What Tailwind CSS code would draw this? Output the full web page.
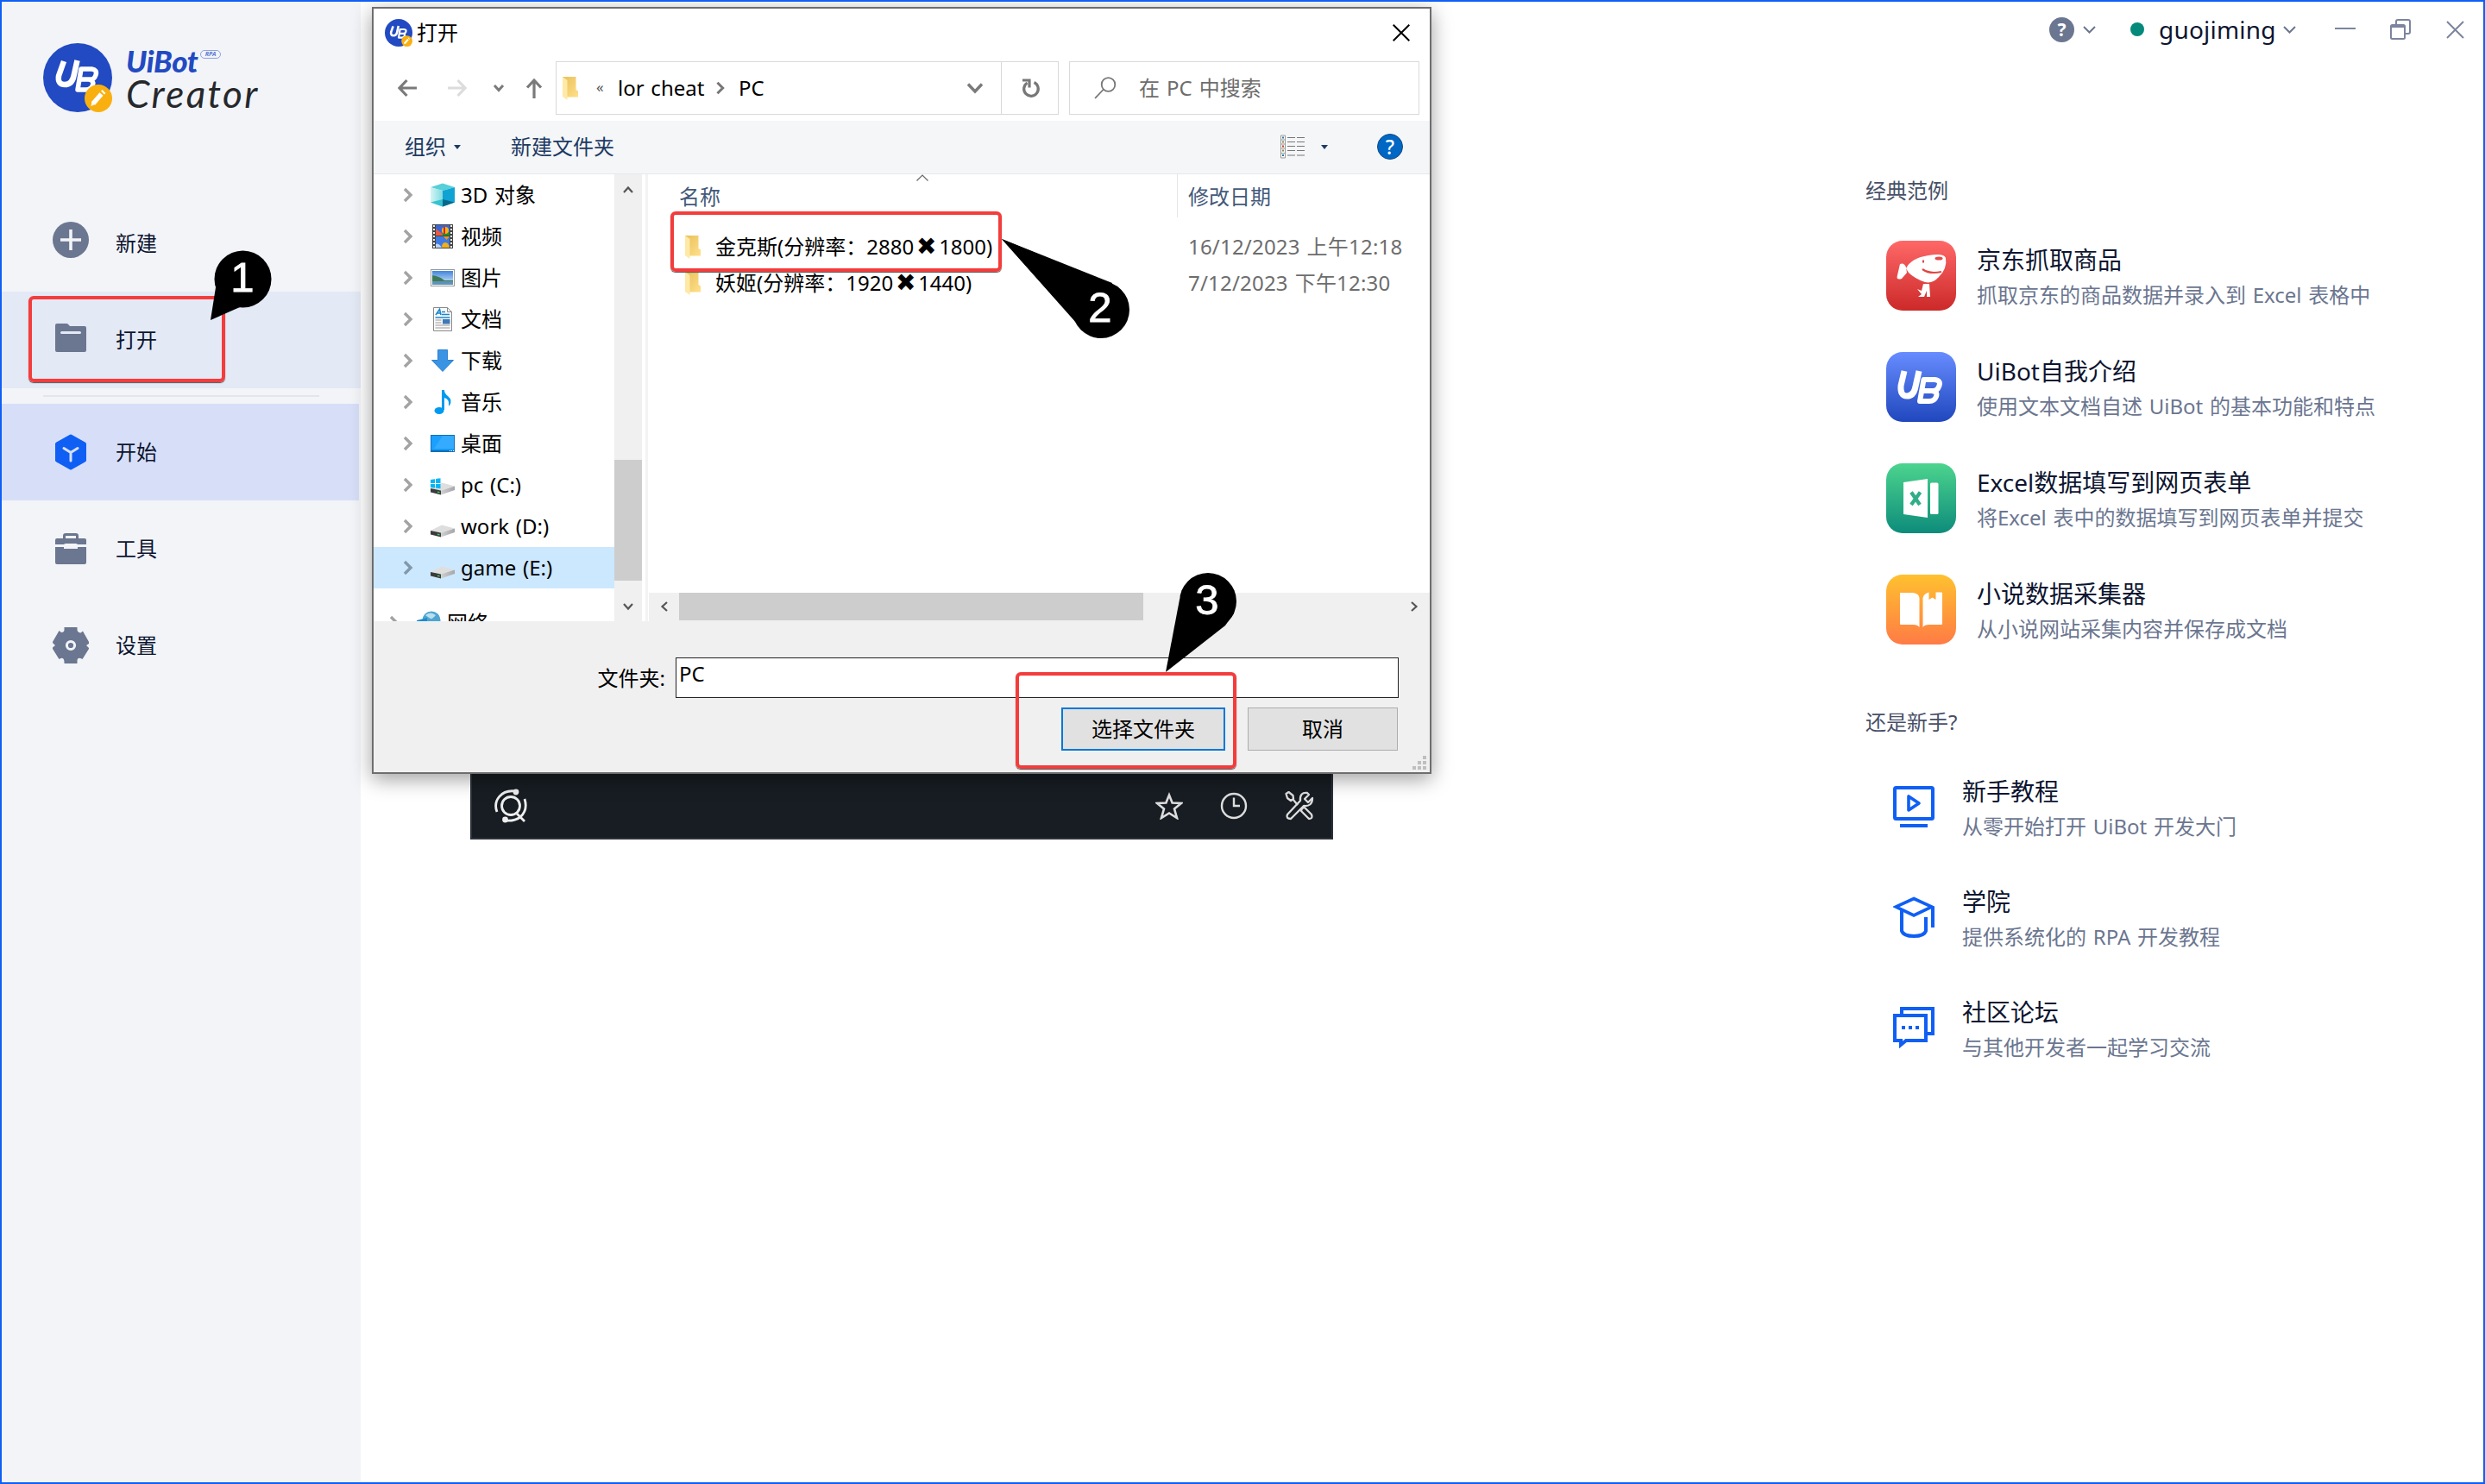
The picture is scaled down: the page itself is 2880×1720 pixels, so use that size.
<!DOCTYPE html>
<html lang="zh-CN">
<head>
<meta charset="utf-8">
<title>UiBot Creator</title>
<script src="https://cdn.jsdelivr.net/npm/@tailwindcss/browser@4"></script>
</head>
<body class="bg-white">
<svg class="absolute size-0" aria-hidden="true">
  <defs>
    <linearGradient id="g-fold" x1="0" y1="0" x2="1" y2="1"><stop offset="0" stop-color="#e9bf5b"/><stop offset="1" stop-color="#ffe08a"/></linearGradient>
    <linearGradient id="g-sky" x1="0" y1="0" x2="0" y2="1"><stop offset="0" stop-color="#3f86dc"/><stop offset="1" stop-color="#dcebf8"/></linearGradient>
    <linearGradient id="g-cube" x1="0" y1="0" x2="1" y2="0"><stop offset="0" stop-color="#d6f5f5"/><stop offset="1" stop-color="#7fdbe0"/></linearGradient>
    <linearGradient id="g-drive" x1="0" y1="0" x2="1" y2="0"><stop offset="0" stop-color="#d0d0d2"/><stop offset="1" stop-color="#a6a6a8"/></linearGradient>
    <symbol id="chev-r" viewBox="0 0 12 18"><path d="M2 2l7 7-7 7" fill="none" stroke="currentColor" stroke-width="3.400"/></symbol>
    <symbol id="folder" viewBox="0 0 18 27"><path d="M0 0h15.500v15l2.500 1.500v7H5z" fill="url(#g-fold)"/><path d="M0 0l5.500 4v23L0 23z" fill="#ffe9a6"/></symbol>
    <symbol id="drive" viewBox="0 0 28 20"><path d="M0 8L13 1.500 28 5.500 12 10.500z" fill="#dededf"/><path d="M12 10.500L28 5.500v4.500L12 15.500z" fill="url(#g-drive)"/><path d="M0 8l12 2.500v5L0 12.500z" fill="#3b3b3b"/><path d="M8 11.400l2.500.6v1.600l-2.500-.6z" fill="#39d353"/></symbol>
    <symbol id="logo" viewBox="0 0 80 80"><circle cx="40" cy="40" r="40" fill="#224ac2"/>
      <path d="M24 21l-6 17q-1.500 10 7 10t10.500-10l4-18" fill="none" stroke="#fff" stroke-width="6.500"/>
      <path d="M44 30h12.500q6.500 1 4.500 7t-8 5h-9 9q6 1 4.500 6.500t-8 5.500H40z" fill="none" stroke="#fff" stroke-width="5.500" stroke-linejoin="round"/>
      <circle cx="64" cy="64" r="16" fill="#f9b00f"/><path d="M58 70l9.500-11" stroke="#fff" stroke-width="5.500"/><path d="M55.500 73l1-6 4.500 3.500z" fill="#fff"/><path d="M69 57.500l1.500-1.500" stroke="#fff" stroke-width="5.500"/></symbol>
  </defs>
</svg>

<div class="relative w-[2880px] h-[1720px] border-2 border-[#0f5ff5] bg-white overflow-hidden flex justify-between font-['Noto_Sans','Noto_Sans_CJK_SC',sans-serif] text-2xl leading-none text-[#0d1530] [word-spacing:1.5px]">

  <!-- Sidebar -->
  <aside class="w-[416px] h-full bg-[#f2f4f8] flex flex-col">
    <div class="flex h-[224px] pt-12 pl-12">
      <svg class="size-20 shrink-0"><use href="#logo"/></svg>
      <div class="ml-4 pt-[6px]">
        <div class="flex">
          <span class="font-['Lato','Noto_Sans',sans-serif] font-black italic text-[35px] leading-[28px] text-[#224ac2] w-[86px] tracking-[-0.3px]">UiBot</span>
          <span class="mt-[2px] w-[24px] h-[10px] rounded-full border border-[#8da3e3] text-[#5b79d3] text-[7px] leading-[8px] font-bold italic text-center">RPA</span>
        </div>
        <div class="font-['Lato','Noto_Sans',sans-serif] italic text-[44px] leading-[44px] mt-0.5 text-[#26282b] tracking-[2.4px]">Creator</div>
      </div>
    </div>
    <nav>
      <div class="h-[112px] flex items-center pl-[59px] gap-[31px]">
        <svg class="size-[42px] -mt-2" viewBox="0 0 42 42"><circle cx="21" cy="21" r="21" fill="#6b7690"/><path d="M21 9v24M9 21h24" stroke="#f2f4f8" stroke-width="3.600"/></svg><span class="leading-9">新建</span>
      </div>
      <div class="h-[112px] bg-[#e3e9f5] flex items-center pl-[59px] gap-[31px]">
        <svg class="size-[42px] -mt-1" viewBox="0 0 42 42"><path d="M5 4h11q2 0 3 2l1 1h17q2 0 2 2v26q0 2-2 2H5q-2 0-2-2V6q0-2 2-2z" fill="#6b7690"/><path d="M10.500 14.500h21" stroke="#e3e9f5" stroke-width="3" stroke-linecap="round"/></svg><span class="leading-9">打开</span>
      </div>
      <div class="h-[18px] pt-2 pl-12"><div class="w-80 h-0.5 bg-[#e2e5ea]"></div></div>
      <div class="h-[112px] w-[414px] bg-[#d7dff8] flex items-center pl-[59px] gap-[31px]">
        <svg class="size-[42px]" viewBox="0 0 42 42"><path d="M21 2.500l16 9v19l-16 9-16-9v-19z" fill="#0f5ff5" stroke="#0f5ff5" stroke-width="4" stroke-linejoin="round"/><path d="M13 16.500l8 5 8-5M21 21v10" fill="none" stroke="#d7dff8" stroke-width="3" stroke-linecap="round"/></svg><span class="leading-9">开始</span>
      </div>
      <div class="h-[112px] flex items-center pl-[59px] gap-[31px]">
        <svg class="size-[42px]" viewBox="0 0 42 42"><path d="M13.500 10V6q0-1.500 1.500-1.500h12q1.500 0 1.500 1.500v4" fill="none" stroke="#6b7690" stroke-width="3"/><path d="M5 9h32q2 0 2 2v5H3v-5q0-2 2-2zM3 19h10v2h16v-2h10v18q0 2-2 2H5q-2 0-2-2z" fill="#6b7690"/><rect x="13" y="15" width="16" height="6" rx="2" fill="#f2f4f8"/></svg><span class="leading-9">工具</span>
      </div>
      <div class="h-[112px] flex items-center pl-[59px] gap-[31px]">
        <svg class="size-[42px]" viewBox="0 0 42 42"><path d="M13.500 0h15v3q0 2 2 3l2 .5 2.500-2L42 17v2l-3 2 3 3v1l-7.500 12-2-1q-4-1-4 3v3h-15v-2q-.5-5-4-4l-2 1L0 25v-1.500l3-2.500-3-3v-1L7.500 4l2.500 2q3.500 0 3.500-3z" fill="#6b7690"/><circle cx="21" cy="21" r="4.600" fill="none" stroke="#f2f4f8" stroke-width="3"/></svg><span class="leading-9">设置</span>
      </div>
    </nav>
  </aside>

  <!-- Right column -->
  <section class="w-[716px] flex flex-col">
    <header class="h-[64px] flex items-center text-[#6b7690] pl-[213px]">
      <div class="size-[29px] rounded-full bg-[#6b7690] text-white text-[21px] leading-[29px] font-bold text-center">?</div>
      <svg class="ml-[10px] w-[15px] h-[9px]" viewBox="0 0 15 9"><path d="M1 1l6.500 6.500L14 1" fill="none" stroke="#6b7690" stroke-width="2"/></svg>
      <div class="ml-[40px] size-4 rounded-full bg-[#04897b]"></div>
      <div class="ml-[17px] w-[136px] text-[28px] leading-10 text-[#0d1530] tracking-[0.2px] whitespace-nowrap">guojiming</div>
      <svg class="ml-[8px] w-[15px] h-[9px]" viewBox="0 0 15 9"><path d="M1 1l6.500 6.500L14 1" fill="none" stroke="#6b7690" stroke-width="2"/></svg>
      <svg class="ml-[45px] w-6 h-6" viewBox="0 0 24 24"><path d="M0 11h24" stroke="#7b859d" stroke-width="2"/></svg>
      <svg class="ml-[40px] w-6 h-6" viewBox="0 0 24 24" fill="none" stroke="#7b859d" stroke-width="2"><path d="M7 6V3q0-2 2-2h12q2 0 2 2v12q0 2-2 2h-4"/><rect x="1" y="7" width="16" height="16" rx="1.500"/><path d="M1 8.500h16" stroke-width="3"/></svg>
      <svg class="ml-[41px] size-[21px]" viewBox="0 0 21 21"><path d="M1 1l19 19M20 1L1 20" stroke="#7b859d" stroke-width="2"/></svg>
    </header>

    <h2 class="mt-[137px] h-9 leading-9 text-[#475067]">经典范例</h2>
    <div class="mt-[40px] ml-6 flex flex-col gap-12">
      <div class="flex h-[81px] gap-6">
        <svg class="size-[81px] shrink-0" viewBox="0 0 81 81"><defs><linearGradient id="r1" x2="0" y2="1"><stop stop-color="#ff6868"/><stop offset="1" stop-color="#cc2929"/></linearGradient></defs><rect width="81" height="81" rx="19" fill="url(#r1)"/><path d="M23 32q6-12 26-15 18-3 20 3 2 12-8 22-7 8-16 6-12-4-19-11-2-3-3-5z" fill="#fff"/><path d="M16 27q5-2 7 4l1 6-6 7q-7 2-5-4z" fill="#fff"/><path d="M42 33q8 6 22 3" fill="none" stroke="#e24444" stroke-width="2.200"/><ellipse cx="61" cy="20.500" rx="4.500" ry="2" fill="#e34a4a"/><path d="M43 22.500v3" stroke="#e24444" stroke-width="2"/><path d="M43 50h7l1 15h-4v-7l-3 7h-7l4-3-5-6 5 2z" fill="#fff"/></svg>
        <div class="flex flex-col"><span class="text-[28px] leading-[45px]">京东抓取商品</span><span class="leading-9 text-[#6b7690] whitespace-nowrap">抓取京东的商品数据并录入到 Excel 表格中</span></div>
      </div>
      <div class="flex h-[81px] gap-6">
        <svg class="size-[81px] shrink-0" viewBox="0 0 81 81"><defs><linearGradient id="r2" x2="0" y2="1"><stop stop-color="#668cff"/><stop offset="1" stop-color="#2147be"/></linearGradient></defs><rect width="81" height="81" rx="19" fill="url(#r2)"/><path d="M21 22l-4 17q-1 12 7 12t10-11l4-18" fill="none" stroke="#fff" stroke-width="7"/><path d="M43.500 32h13q7 1 5 7t-7 6H45h8q7 1 5 6.500t-8 5.500H39z" fill="none" stroke="#fff" stroke-width="6" stroke-linejoin="round"/></svg>
        <div class="flex flex-col"><span class="text-[28px] leading-[45px]">UiBot自我介绍</span><span class="leading-9 text-[#6b7690] whitespace-nowrap">使用文本文档自述 UiBot 的基本功能和特点</span></div>
      </div>
      <div class="flex h-[81px] gap-6">
        <svg class="size-[81px] shrink-0" viewBox="0 0 81 81"><defs><linearGradient id="r3" x2="0" y2="1"><stop stop-color="#4cd48e"/><stop offset="1" stop-color="#0d8c7b"/></linearGradient></defs><rect width="81" height="81" rx="19" fill="url(#r3)"/><path d="M20 22l28-4v45l-28-4z" fill="#fff"/><rect x="51" y="22.500" width="9.500" height="36.500" rx="1.500" fill="#fff"/><path d="M29 33.500l10 14.500M39.500 33.500L29 48" stroke="#2fae88" stroke-width="4.200"/></svg>
        <div class="flex flex-col"><span class="text-[28px] leading-[45px]">Excel数据填写到网页表单</span><span class="leading-9 text-[#6b7690] whitespace-nowrap">将Excel 表中的数据填写到网页表单并提交</span></div>
      </div>
      <div class="flex h-[81px] gap-6">
        <svg class="size-[81px] shrink-0" viewBox="0 0 81 81"><defs><linearGradient id="r4" x2="0" y2="1"><stop stop-color="#ffc12f"/><stop offset="1" stop-color="#ff7b45"/></linearGradient></defs><rect width="81" height="81" rx="19" fill="url(#r4)"/><path d="M16 21h15q7 1 7.500 6v34q-2-3-7-3H17q-1 0-1-1zM42.500 27q1-5 7-6.500v8.500l4-2.500 4 2.500v-8.500H64q1 0 1 1V57q0 1-1 1H50q-6 0-7.500 3z" fill="#fff"/></svg>
        <div class="flex flex-col"><span class="text-[28px] leading-[45px]">小说数据采集器</span><span class="leading-9 text-[#6b7690] whitespace-nowrap">从小说网站采集内容并保存成文档</span></div>
      </div>
    </div>

    <h2 class="mt-[72px] h-9 leading-9 text-[#475067]">还是新手?</h2>
    <div class="mt-[40px] ml-8 flex flex-col gap-[46px] text-[#0f5ff5]">
      <div class="flex h-[82px] gap-8">
        <svg class="mt-4 size-12 shrink-0" viewBox="0 0 48 48" fill="none" stroke="currentColor" stroke-width="4"><rect x="2" y="2" width="44" height="36" rx="1.500"/><path d="M18 12v16l12-8z" stroke-width="3.600" stroke-linejoin="round"/><path d="M8 46h32"/></svg>
        <div class="flex flex-col"><span class="text-[28px] leading-[45px] text-[#0d1530]">新手教程</span><span class="leading-9 text-[#6b7690] whitespace-nowrap">从零开始打开 UiBot 开发大门</span></div>
      </div>
      <div class="flex h-[82px] gap-8">
        <svg class="mt-4 size-12 shrink-0" viewBox="0 0 48 48" fill="none" stroke="currentColor" stroke-width="4"><path d="M24 2.500L45 12 24 22 3 12z" stroke-width="3.600"/><path d="M10 16v24q2 6 14 6t14-6V24M46 12v24"/></svg>
        <div class="flex flex-col"><span class="text-[28px] leading-[45px] text-[#0d1530]">学院</span><span class="leading-9 text-[#6b7690] whitespace-nowrap">提供系统化的 RPA 开发教程</span></div>
      </div>
      <div class="flex h-[82px] gap-8">
        <svg class="mt-4 size-12 shrink-0" viewBox="0 0 48 48" fill="none" stroke="currentColor" stroke-width="4"><path d="M10 9V2h36v29h-7"/><path d="M2 10h36v29H15l-6 5v-5H2z"/><path d="M10 24h4M18 24h4M26 24h4"/></svg>
        <div class="flex flex-col"><span class="text-[28px] leading-[45px] text-[#0d1530]">社区论坛</span><span class="leading-9 text-[#6b7690] whitespace-nowrap">与其他开发者一起学习交流</span></div>
      </div>
    </div>
  </section>

  <!-- Dark launcher strip behind the dialog -->
  <div class="absolute left-[543px] top-[880px] w-[1000px] h-[91px] bg-[#171d23] border-2 border-[#2b323a] flex items-end pb-[17px] pl-[26px] pr-[20px]">
    <svg class="w-[38px] h-[40px]" viewBox="0 0 38 40" fill="none" stroke="#eee" stroke-width="2.800"><circle cx="19" cy="20" r="10.500"/><path d="M25 28l10 10M3 27C-2 14 8 1 24 3M35 12q4 13-5 21-7 5-17 4"/><circle cx="25" cy="4" r="2" fill="#eee"/><circle cx="12.500" cy="36" r="2" fill="#eee"/></svg>
    <div class="ml-auto flex items-center gap-[43px] mb-[3px]">
      <svg class="size-8" viewBox="0 0 32 32" fill="none" stroke="#ddd" stroke-width="2.600"><path d="M16 3.500l3.600 9 10.400.5-8 6.500 3 10.500L16 24.500 7 30l3-10.500L2 13l10.400-.5z"/></svg>
      <svg class="size-8" viewBox="0 0 32 32" fill="none" stroke="#ddd" stroke-width="2.400"><circle cx="16" cy="16" r="14"/><path d="M16 6.500V16h7"/></svg>
      <svg class="size-[34px]" viewBox="0 0 34 34" fill="none" stroke="#ddd" stroke-width="2.300" stroke-linejoin="round"><path d="M1.500 3l3-2 5 4 .5 4-3 2-4-3z"/><path d="M9 9l6 7M20 20l3-1 8 8q2 5-3 5L19 23z"/><path d="M26 2q-9-1-8 9L3 27q-2 5 4 5l15-15q10 1 10-9l-5 5-4-4 5-5z"/></svg>
    </div>
  </div>

  <!-- Folder picker dialog -->
  <div class="absolute left-[429px] top-[6px] w-[1228px] h-[889px] border-2 border-[#6e6e6e] bg-white shadow-[0_6px_22px_rgba(0,0,0,0.38)] flex flex-col text-black">
    <div class="h-[56px] flex items-center pb-px pl-[13px] pr-[23px]">
      <svg class="size-8" viewBox="0 0 80 80"><use href="#logo"/></svg><span class="ml-[5px] leading-9">打开</span>
      <svg class="ml-auto size-[20px]" viewBox="0 0 20 20"><path d="M.7.7l18.600 18.600M19.300.7L.7 19.300" stroke="#000" stroke-width="2"/></svg>
    </div>
    <div class="h-[74px] flex items-center pb-[2px] pl-[28px]">
      <svg class="w-[168px] h-6 shrink-0" viewBox="0 0 168 24" fill="none" stroke="#7a7a7a" stroke-width="3.200"><path d="M22 12H2M10.500 3L2 12l8.500 9"/><path d="M58 12h20M69.500 3L78 12l-8.500 9" stroke="#dcdcdc"/><path d="M112 9l5 5.500L122 9" stroke-width="3"/><path d="M158 25V3M150 11.500L158 3l8 8.500"/></svg>
      <div class="ml-[15px] w-[583px] h-[62px] border border-[#d9d9d9] flex items-center">
        <svg class="ml-[7px] w-[18px] h-[27px]"><use href="#folder"/></svg>
        <span class="ml-[21px] -mt-1 text-[17px] text-[#555] w-[10px]">«</span>
        <span class="ml-[15px] w-[100px] leading-9 whitespace-nowrap">lor cheat</span>
        <svg class="ml-[13px] w-[12px] h-[16px] text-[#777]"><use href="#chev-r"/></svg>
        <span class="ml-[15px] leading-9">PC</span>
        <svg class="ml-auto mr-[20px] w-[20px] h-[14px]" viewBox="0 0 20 14"><path d="M2 2.500L10 11l8-8.500" fill="none" stroke="#7a7a7a" stroke-width="3.400"/></svg>
        <div class="w-[66px] h-full border-l border-[#d9d9d9] flex items-center pl-[23px]">
          <svg class="w-[22px] h-[24px]" viewBox="0 0 22 24" fill="none" stroke="#777" stroke-width="3.200"><path d="M14.500 5.500a8.300 8.300 0 1 1-8 .5"/><path d="M1 3h8v8.500"/></svg>
        </div>
      </div>
      <div class="ml-[12px] w-[406px] h-[62px] border border-[#d9d9d9] flex items-center">
        <svg class="ml-[28px] size-[26px]" viewBox="0 0 26 26" fill="none" stroke="#777" stroke-width="1.800"><circle cx="16.500" cy="9" r="7.800"/><path d="M11 14.500L1 25"/></svg>
        <span class="ml-[26px] leading-9 text-[#6d6d6d] tracking-[0.1px]">在 PC 中搜索</span>
      </div>
    </div>
    <div class="h-[62px] bg-[#f4f6f8] border-b border-[#e6e8ea] flex items-center pb-px pl-[36px] text-[#1d3a63]">
      <span class="leading-9">组织</span>
      <svg class="ml-[9px] w-2 h-[5px]" viewBox="0 0 8 5"><path d="M0 0h8L4 5z" fill="#1d3a63"/></svg>
      <span class="ml-[58px] leading-9">新建文件夹</span>
      <svg class="ml-auto w-[28px] h-[28px]" viewBox="0 0 28 28"><path d="M.5 1h5v26h-5zM.5 6h5M.5 11h5M.5 16h5M.5 21.500h5" fill="#fff" stroke="#999" stroke-width="1"/><path d="M8 3.500h9M19 3.500h9M8 8.500h9M19 8.500h9M8 13.500h9M19 13.500h9M8 18.500h9M19 18.500h9M8 24h9M19 24h9" stroke="#777" stroke-width="1.200"/><path d="M2 3.500h2M2 24h2" stroke="#2a7a9c" stroke-width="2"/><path d="M2 8.500h2M2 18.500h2" stroke="#8a8a4a" stroke-width="2"/><path d="M2 13.500h2" stroke="#c33" stroke-width="2"/></svg>
      <svg class="ml-[19px] w-2 h-[5px]" viewBox="0 0 8 5"><path d="M0 0h8L4 5z" fill="#1d3a63"/></svg>
      <div class="ml-[57px] mr-[31px] size-[30px] rounded-full bg-[#0067c5] border border-[#16487c] text-white text-[23px] leading-[28px] text-center font-medium">?</div>
    </div>

    <div class="h-[518px] flex">
      <!-- Navigation tree -->
      <div class="w-[279px] h-full overflow-hidden text-[24px]">
        <div class="h-12 flex items-center pl-[34px]"><svg class="w-3 h-[18px] text-[#a3a3a3]"><use href="#chev-r"/></svg>
          <svg class="ml-5 w-7 h-7" viewBox="0 0 28 28"><path d="M0 5L14 .5 28 5 14 9z" fill="#56cfd8"/><path d="M0 5l14 4v18.500L0 22.500z" fill="url(#g-cube)"/><path d="M14 9l14-4v17.500l-14 5z" fill="#0fa3d4"/><path d="M0 22.500L14 19v8.500z" fill="#35c4cf"/><path d="M14 19l14 3.500-14 5z" fill="#08688c"/></svg><span class="ml-[7px] leading-9">3D 对象</span></div>
        <div class="h-12 flex items-center pl-[34px]"><svg class="w-3 h-[18px] text-[#a3a3a3]"><use href="#chev-r"/></svg>
          <svg class="ml-5 w-7 h-7" viewBox="0 0 28 28"><rect x="2" width="24" height="28" fill="#444"/><path d="M4 1v27M24 1v27" stroke="#eee" stroke-width="2" stroke-dasharray="2 2"/><rect x="6" y="1" width="16" height="12" fill="#3866d8"/><rect x="6" y="14" width="16" height="13" fill="#3f79e2"/><path d="M6 5q4 3 8 6v2H6z" fill="#e75a3c"/><path d="M14 10q4 0 8-1v4h-8z" fill="#1f8f2c"/><circle cx="17" cy="7" r="4" fill="#f5b515"/><path d="M16 3v8" stroke="#d22" stroke-width="2"/><path d="M15 14h7l-3.500 4z" fill="#e8961c"/><path d="M13 27q0-6 4-6t5 6z" fill="#f0b01a"/><path d="M6 23q3-2 7 4H6z" fill="#bcd3f6"/></svg><span class="ml-[7px] leading-9">视频</span></div>
        <div class="h-12 flex items-center pl-[34px]"><svg class="w-3 h-[18px] text-[#a3a3a3]"><use href="#chev-r"/></svg>
          <svg class="ml-5 w-7 h-7" viewBox="0 0 28 28"><rect x=".5" y="4.500" width="27" height="19" fill="#fff" stroke="#999"/><rect x="2" y="6" width="24" height="16" fill="url(#g-sky)"/><path d="M2 11q8 1 14 6h10v2H2z" fill="#3e7a55"/><path d="M2 18h24v4H2z" fill="#5d93b8"/></svg><span class="ml-[7px] leading-9">图片</span></div>
        <div class="h-12 flex items-center pl-[34px]"><svg class="w-3 h-[18px] text-[#a3a3a3]"><use href="#chev-r"/></svg>
          <svg class="ml-5 w-7 h-7" viewBox="0 0 28 28"><path d="M3.500.5h16l5 5v22h-21z" fill="#fafafa" stroke="#8a8a8a"/><path d="M19.500.5v5h5" fill="none" stroke="#8a8a8a"/><path d="M6 9l4.500-6.500L12 9M8 7h4" fill="none" stroke="#1787cf" stroke-width="1.600"/><path d="M13 5.500h4M13 8.500h9M5.500 12h17" stroke="#1787cf" stroke-width="1.400"/><path d="M5.500 15h7M5.500 18h7M5.500 21h17M5.500 24h17" stroke="#9a9a9a"/><rect x="14" y="14" width="8.500" height="5.500" fill="#3f79b5"/></svg><span class="ml-[7px] leading-9">文档</span></div>
        <div class="h-12 flex items-center pl-[34px]"><svg class="w-3 h-[18px] text-[#a3a3a3]"><use href="#chev-r"/></svg>
          <svg class="ml-5 w-7 h-7" viewBox="0 0 28 28"><path d="M8.500 1.500h11v12h7L14 26.500 1.500 13.500h7z" fill="#3b94e3" stroke="#2c82d0"/></svg><span class="ml-[7px] leading-9">下载</span></div>
        <div class="h-12 flex items-center pl-[34px]"><svg class="w-3 h-[18px] text-[#a3a3a3]"><use href="#chev-r"/></svg>
          <svg class="ml-5 w-7 h-7" viewBox="0 0 28 28"><ellipse cx="10" cy="24" rx="5.500" ry="4" fill="#009af0"/><path d="M13 24V0h3q0 4 4 7 6 5 2 11-1 1-1-1 1-6-5-8v14z" fill="#009af0"/></svg><span class="ml-[7px] leading-9">音乐</span></div>
        <div class="h-12 flex items-center pl-[34px]"><svg class="w-3 h-[18px] text-[#a3a3a3]"><use href="#chev-r"/></svg>
          <svg class="ml-5 w-7 h-7" viewBox="0 0 28 28"><rect x=".5" y="4.500" width="27" height="19" fill="#1aa0ff" stroke="#0a6fba"/><path d="M14 5h13v15H4z" fill="#47b3ff" opacity=".6"/><path d="M1 22.500h27" stroke="#0a6fba" stroke-width="1.600"/><path d="M22 22.500h5" stroke="#fff" stroke-dasharray="1 1"/></svg><span class="ml-[7px] leading-9">桌面</span></div>
        <div class="h-12 flex items-center pl-[34px]"><svg class="w-3 h-[18px] text-[#a3a3a3]"><use href="#chev-r"/></svg>
          <svg class="ml-5 w-7 h-7" viewBox="0 0 28 28"><use href="#drive" x="0" y="10" width="28" height="20"/><path d="M0 8l5-.7V12H0zM6 7.100l5.500-.8V12H6zM0 13h5v4.500L0 17zM6 13h5.500v5.300L6 17.600z" fill="#00b6f5"/></svg><span class="ml-[7px] leading-9">pc (C:)</span></div>
        <div class="h-12 flex items-center pl-[34px]"><svg class="w-3 h-[18px] text-[#a3a3a3]"><use href="#chev-r"/></svg>
          <svg class="ml-5 w-7 h-7" viewBox="0 0 28 28"><use href="#drive" x="0" y="11" width="28" height="20"/></svg><span class="ml-[7px] leading-9">work (D:)</span></div>
        <div class="h-12 flex items-center pl-[34px] bg-[#cce8ff]"><svg class="w-3 h-[18px] text-[#8398a8]"><use href="#chev-r"/></svg>
          <svg class="ml-5 w-7 h-7" viewBox="0 0 28 28"><use href="#drive" x="0" y="11" width="28" height="20"/></svg><span class="ml-[7px] leading-9">game (E:)</span></div>
        <div class="mt-[16px] h-12 flex items-center pl-[18px]"><svg class="w-3 h-[18px] text-[#a3a3a3]"><use href="#chev-r"/></svg>
          <svg class="ml-5 w-7 h-7" viewBox="0 0 28 28"><circle cx="17" cy="11" r="10.500" fill="#4fa5d0"/><path d="M10 5q6-5 12 0-4 5-6 4t-6-4z" fill="#b9dff0"/><path d="M0 11l12-3v14H0z" fill="#1e8bd0"/></svg><span class="ml-[7px] leading-9">网络</span></div>
      </div>
      <div class="w-8 h-full bg-[#f0f0f0] flex flex-col items-center">
        <svg class="mt-[13px] w-3 h-[9px]" viewBox="0 0 12 9"><path d="M1 8l5-5.500L11 8" fill="none" stroke="#555" stroke-width="2.200"/></svg>
        <div class="mt-[309px] w-8 h-[140px] bg-[#cdcdcd]"></div>
        <svg class="mt-[26px] w-3 h-[9px]" viewBox="0 0 12 9"><path d="M1 1l5 5.500L11 1" fill="none" stroke="#555" stroke-width="2.200"/></svg>
      </div>
      <div class="w-1 h-full bg-white"></div>
      <div class="w-[3px] h-full bg-[#f3f3f3]"></div>

      <!-- File list -->
      <div class="flex-1 flex flex-col">
        <div class="relative h-[50px] flex items-center text-[#44597a]">
          <span class="w-[613px] pl-[36px] leading-9 h-full pt-2">名称</span>
          <span class="h-full border-l border-[#e5e5e5] pl-3 pt-2 leading-9">修改日期</span>
          <svg class="absolute left-[311px] top-0 w-[14px] h-2" viewBox="0 0 14 8"><path d="M.5 7.500L7 1l6.500 6.500" fill="none" stroke="#666" stroke-width="1.200"/></svg>
        </div>
        <div class="mt-[13px] h-[42px] flex items-center pl-[43px]">
          <svg class="w-[18px] h-[27px]"><use href="#folder"/></svg>
          <span class="ml-[17px] w-[548px] h-9 leading-9 whitespace-nowrap flex">金克斯(分辨率：2880<span class="w-[29px] text-center text-[28px] font-['DejaVu_Sans',sans-serif]">✖</span>1800)</span>
          <span class="leading-9 text-[#6d6d6d] whitespace-nowrap tracking-[0.2px]">16/12/2023 上午12:18</span>
        </div>
        <div class="h-[42px] flex items-center pl-[43px]">
          <svg class="w-[18px] h-[27px]"><use href="#folder"/></svg>
          <span class="ml-[17px] w-[548px] h-9 leading-9 whitespace-nowrap flex">妖姬(分辨率：1920<span class="w-[29px] text-center text-[28px] font-['DejaVu_Sans',sans-serif]">✖</span>1440)</span>
          <span class="leading-9 text-[#6d6d6d] whitespace-nowrap tracking-[0.2px]">7/12/2023 下午12:30</span>
        </div>
        <div class="mt-auto ml-px h-[33px] bg-[#f0f0f0] flex items-center pb-px">
          <svg class="ml-[13px] w-[9px] h-3" viewBox="0 0 9 12"><path d="M8 1L2.500 6 8 11" fill="none" stroke="#555" stroke-width="2.200"/></svg>
          <div class="ml-[13px] w-[538px] h-full bg-[#cdcdcd]"></div>
          <svg class="ml-auto mr-[13px] w-[9px] h-3" viewBox="0 0 9 12"><path d="M1 1l5.500 5L1 11" fill="none" stroke="#555" stroke-width="2.200"/></svg>
        </div>
      </div>
    </div>

    <!-- Footer -->
    <div class="relative flex-1 bg-[#f0f0f0] flex flex-col pt-[42px] pr-[36px]">
      <div class="flex h-[47px]">
        <span class="w-[350px] pt-1.5 text-right pr-[12px] leading-9">文件夹:</span>
        <div class="flex-1 border border-[#222] bg-white pl-[3px] leading-[36px]">PC</div>
      </div>
      <div class="mt-[11px] mr-px flex justify-end gap-[26px] h-[50px]">
        <div class="w-[190px] border-2 border-[#0078d7] bg-[#e1e1e1] text-center leading-[46px]">选择文件夹</div>
        <div class="w-[174px] border border-[#adadad] bg-[#e1e1e1] text-center leading-[48px]">取消</div>
      </div>
      <svg class="absolute right-[4px] bottom-[3px] w-4 h-4" viewBox="0 0 16 16"><path d="M12 0h4v4h-4zM12 6h4v4h-4zM6 6h4v4H6zM12 12h4v4h-4zM6 12h4v4H6zM0 12h4v4H0z" fill="#bfbfbf"/></svg>
    </div>
  </div>

  <!-- Step annotations -->
  <div class="absolute left-[31px] top-[341px] w-[228px] h-[100px] border-4 border-[#f43c3c] rounded-md shadow-[0_1px_1px_#555]"></div>
  <div class="absolute left-[775px] top-[243px] w-[384px] h-[70px] border-4 border-[#f43c3c] rounded-md shadow-[0_1px_1px_#555]"></div>
  <div class="absolute left-[1175px] top-[777px] w-[256px] h-[112px] border-4 border-[#f43c3c] rounded-md shadow-[0_1px_1px_#555]"></div>
  <svg class="absolute -left-0.5 -top-0.5 w-[1700px] h-[900px] font-['Liberation_Sans',sans-serif] text-[49px]" viewBox="0 0 1700 900">
    <g fill="#000"><circle cx="281.500" cy="323.500" r="33"/><path d="M244 371l6-38 8-30 45 45-25 8z"/>
    <circle cx="1276" cy="359" r="33"/><path d="M1161 277l121 50 10 20-35 35-9-7z"/>
    <circle cx="1400" cy="697" r="33"/><path d="M1351 779l16-84 20-20 43 36-10 14z"/>
    <path d="M1161 277l128 51-20 40-22 5z"/></g>
    <g fill="#fff" text-anchor="middle" stroke="#fff" stroke-width=".8"><text x="281" y="338">1</text><text x="1275" y="373">2</text><text x="1399" y="712">3</text></g>
  </svg>
</div>
</body>
</html>
